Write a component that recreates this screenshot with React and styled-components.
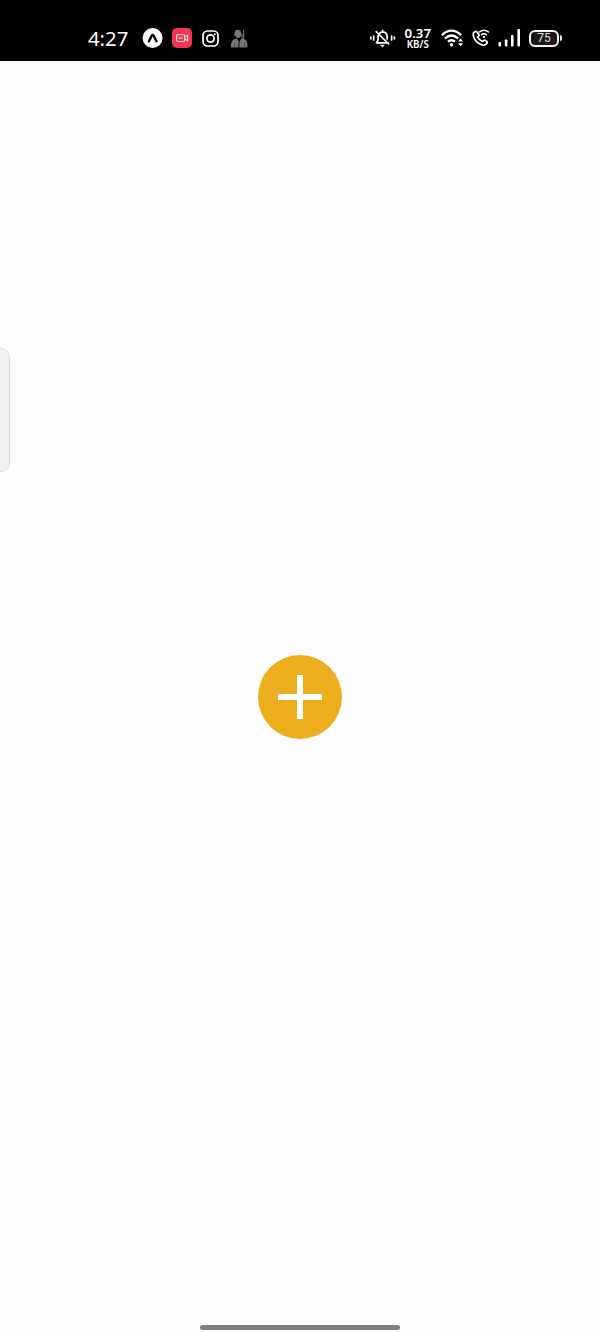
import React from "react";
import styled, { createGlobalStyle } from "styled-components";

const GlobalStyle = createGlobalStyle`
  * { box-sizing: border-box; }
  body { margin: 0; background: #fefdfe; font-family: "Noto Sans", "Open Sans", sans-serif; }
`;

const Screen = styled.div`
  position: relative;
  display: flex;
  flex-direction: column;
  width: 100%;
  height: 1333px;
  overflow: hidden;
  background: #fefdfe;
`;

const StatusBar = styled.header`
  display: flex;
  flex: none;
  justify-content: space-between;
  align-items: center;
  height: 61px;
  padding: 15px 38px 0 88px;
  background: #000;
  color: #fff;
`;

const StatusGroup = styled.div`
  display: flex;
  align-items: center;
  height: 24px;
  gap: ${({ $gap }) => $gap}px;
`;

const Clock = styled.span`
  width: 45px;
  padding-bottom: 1px;
  font-size: 20.3px;
  line-height: 24px;
  white-space: nowrap;
`;

const Speed = styled.div`
  display: flex;
  flex-direction: column;
  align-items: center;
  gap: 1px;
  width: 28px;
  margin-right: 1px;
  font-family: "Noto Sans", sans-serif;
  font-weight: 600;
  white-space: nowrap;
`;

const SpeedValue = styled.span`
  font-size: 13.3px;
  line-height: 11px;
`;

const SpeedUnit = styled.span`
  font-size: 9.8px;
  line-height: 9px;
`;

const Icon = styled.svg`
  display: block;
  flex: none;
  overflow: visible;
`;

const Battery = styled.div`
  display: flex;
  align-items: center;
  gap: 1px;
`;

const BatteryBody = styled.div`
  display: flex;
  align-items: center;
  justify-content: center;
  width: 30px;
  height: 17px;
  border: 2px solid #f5f5f5;
  border-radius: 6px;
  background: #19191b;
  color: #ddd;
  font-family: Roboto, sans-serif;
  font-size: 12px;
  line-height: 13px;
`;

const BatteryCap = styled.div`
  width: 2px;
  height: 6px;
  border-radius: 0 2px 2px 0;
  background: #e8e8e8;
`;

const Content = styled.main`
  display: flex;
  flex: 1;
  align-items: center;
  justify-content: center;
`;

const AddButton = styled.button`
  display: flex;
  align-items: center;
  justify-content: center;
  width: 84px;
  height: 84px;
  padding: 0;
  border: 0;
  border-radius: 50%;
  background: #edae1e;
`;

const EdgeHandle = styled.div`
  position: absolute;
  left: -1px;
  top: 348px;
  width: 11px;
  height: 124px;
  border: 1px solid #dcdddf;
  border-radius: 0 9px 9px 0;
  background: #f0f1f3;
`;

const HomeBar = styled.div`
  position: absolute;
  left: 200px;
  bottom: 3px;
  width: 200px;
  height: 5px;
  border-radius: 3px;
  background: #808080;
`;

const LauncherIcon = () => (
  <Icon width="20" height="20" viewBox="0 0 20 20">
    <circle cx="9.6" cy="10" r="10" fill="#fff" />
    <path d="M5.9 13.2 8.8 7.6q.9-1.4 1.8 0l2.9 5.6" fill="none" stroke="#000" strokeWidth="2.4" strokeLinecap="round" strokeLinejoin="round" />
  </Icon>
);

const RecorderIcon = () => (
  <Icon width="19" height="20" viewBox="0.5 0 19 20">
    <rect x="-.5" width="20" height="20" rx="5" fill="#f3354e" />
    <g fill="none" stroke="#ffd9dc" strokeWidth="1.2" strokeLinejoin="round">
      <rect x="4.1" y="6.5" width="8" height="7" rx="1.2" />
      <path d="m12.3 9 2.8-1.7v5.4L12.3 11M6.3 10h3.5" />
    </g>
  </Icon>
);

const CameraIcon = () => (
  <Icon width="17" height="17" viewBox="0 0 17 17" fill="none" stroke="#fff">
    <rect x="1" y="1" width="15" height="15" rx="4.3" strokeWidth="1.7" />
    <circle cx="8.5" cy="8.5" r="3.6" strokeWidth="1.7" />
    <circle cx="12.8" cy="4.2" r="1" fill="#fff" stroke="none" />
  </Icon>
);

const PersonIcon = () => (
  <Icon width="17" height="19" viewBox="-2 0 17 19" fill="#777">
    <path d="M4 2.2Q5.5.2 8 1q2.4.8 2.2 4.3Q9.8 9 7 9.2 5.2 9 4.8 7.2L3.2 6.5Z" />
    <path d="M0 18.5q-.2-6.5 3-8.2l2.7-.8 2 2.7-.4 6.3ZM8.3 18.5l.2-6 2-3 3 .8q3.3 1.5 3 8.2Z" />
    <path d="M12.6.8v9M10.9 4.8v5" fill="none" stroke="#777" strokeWidth="1.1" />
    <path d="M3.7 14v4.5M13.6 14v4.5" stroke="#303030" strokeWidth=".7" />
  </Icon>
);

const VibrateIcon = () => (
  <Icon width="26" height="20" viewBox="0 0 26 20" fill="none" stroke="#fff" strokeWidth="1.7" strokeLinecap="round" strokeLinejoin="round">
    <path d="M.9 9.2v1.6M3.7 8v4M21.6 8v4M24.4 9.2v1.6" />
    <path d="M9.8 5.2Q10.8 3.8 12.6 3.8q4.4.3 4.6 4.7V11M8.1 7.6v4.2L6.4 14.8h11.8M12.6 3.4V2.3M6.2 3.7 18.7 16" />
    <path d="M11 17.3h3.2l-1.6 1.1Z" fill="#fff" strokeWidth="1" />
  </Icon>
);

const WifiIcon = () => (
  <Icon width="23" height="18" viewBox="0 0 23 18" fill="none" stroke="#fff" strokeWidth="2.3">
    <path d="M.8 6.1q9.7-9 19.4 0M3.8 9.5q6.7-6 13.4 0M7 12.7q3.5-3 7 0" />
    <circle cx="10.5" cy="15.8" r="1.7" fill="#fff" stroke="none" />
    <path d="m17 12.6 2.6-3 2.6 3ZM17 14.3l2.6 3 2.6-3Z" fill="#fff" stroke="none" />
  </Icon>
);

const CallIcon = () => (
  <Icon width="18" height="18" viewBox="0 0 18 18" fill="none" stroke="#fff" strokeWidth="1.7" strokeLinecap="round" strokeLinejoin="round">
    <path d="M2.6 2.7Q.9 3.8 1.2 5.8c.8 4.8 4.5 8.8 9.4 10.3q2 .5 3.4-.9l1-1q.7-.8-.1-1.5l-1.6-1.3q-.8-.5-1.5.1l-1.3 1Q7.2 11 5.6 8.2L6.8 7q.6-.7.1-1.4L5 3q-.9-1.2-2.4-.3Z" />
    <path d="M7.2 3q4.7-3.5 9.4 0M9.5 5.6q2.4-1.8 4.8 0" strokeWidth="1.5" />
    <circle cx="11.9" cy="7.9" r="1.1" fill="#fff" stroke="none" />
  </Icon>
);

const SignalIcon = () => (
  <Icon width="22" height="18" viewBox="0.5 0 22 18" fill="#fff">
    <rect x="0" y="13" width="2.6" height="4.5" rx=".8" />
    <rect x="6.3" y="10.5" width="2.6" height="7" rx=".8" />
    <rect x="12.5" y="6" width="2.6" height="11.5" rx=".8" />
    <rect x="18.9" y="0" width="2.6" height="17.5" rx=".8" />
  </Icon>
);

const PlusIcon = () => (
  <Icon width="44" height="44" viewBox="0 0 44 44">
    <path d="M22 0v44M0 22h44" stroke="#fff" strokeWidth="6" />
  </Icon>
);

export default function App() {
  return (
    <>
      <GlobalStyle />
      <Screen>
        <StatusBar>
          <StatusGroup $gap={10}>
            <Clock>4:27</Clock>
            <LauncherIcon />
            <RecorderIcon />
            <CameraIcon />
            <PersonIcon />
          </StatusGroup>
          <StatusGroup $gap={8.3}>
            <VibrateIcon />
            <Speed>
              <SpeedValue>0.37</SpeedValue>
              <SpeedUnit>KB/S</SpeedUnit>
            </Speed>
            <WifiIcon />
            <CallIcon />
            <SignalIcon />
            <Battery>
              <BatteryBody>75</BatteryBody>
              <BatteryCap />
            </Battery>
          </StatusGroup>
        </StatusBar>
        <Content>
          <AddButton aria-label="Add">
            <PlusIcon />
          </AddButton>
        </Content>
        <EdgeHandle />
        <HomeBar />
      </Screen>
    </>
  );
}
